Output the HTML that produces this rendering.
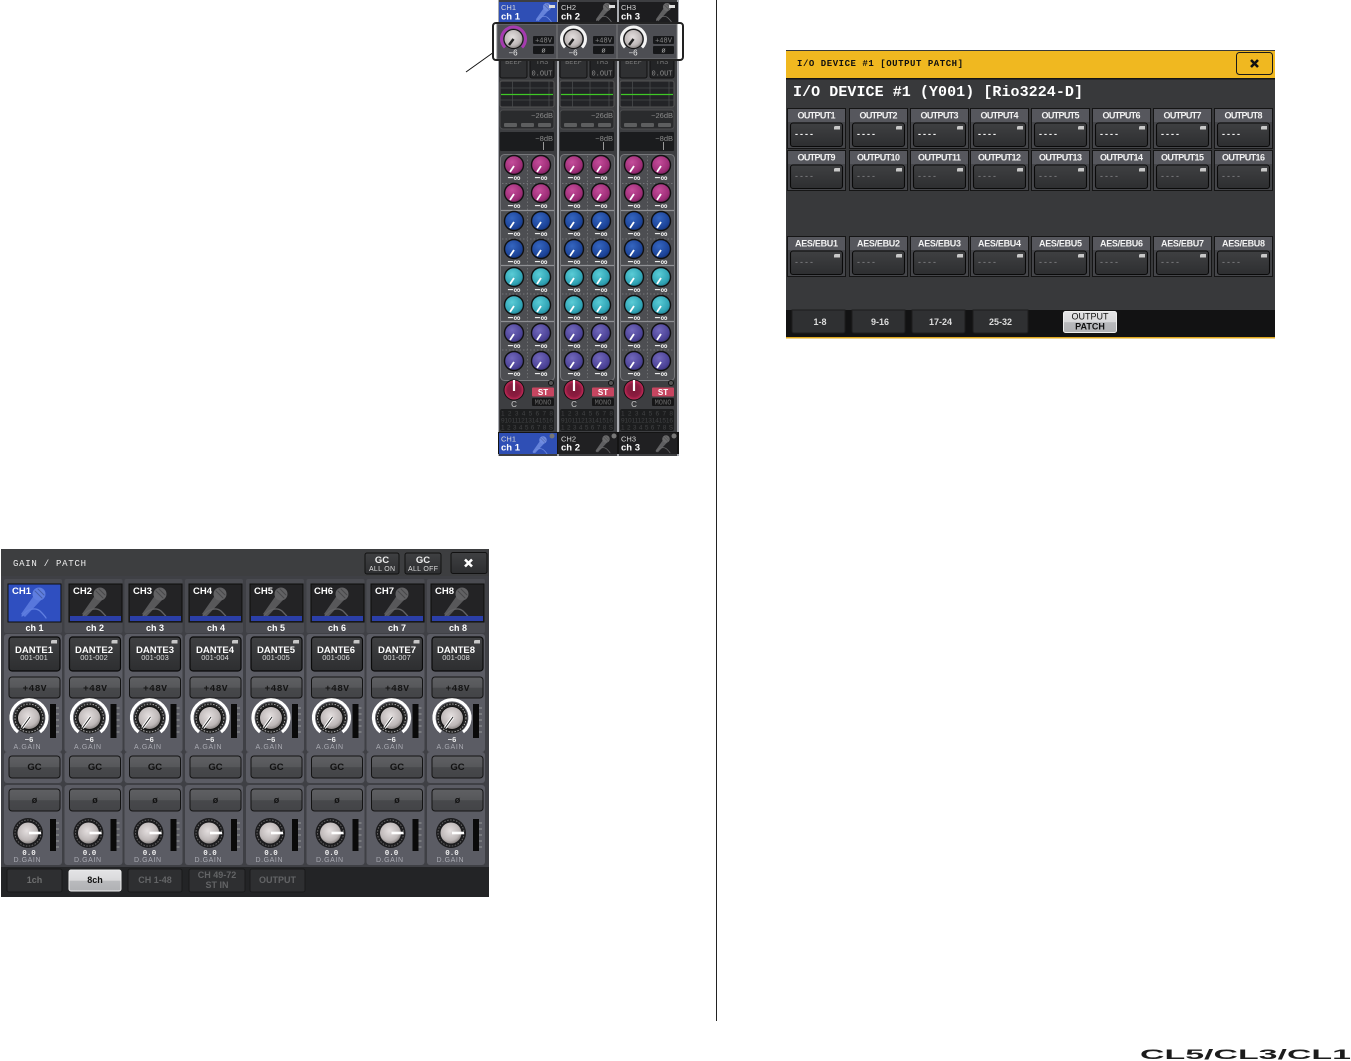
<!DOCTYPE html>
<html><head><meta charset="utf-8"><title>Console</title>
<style>
html,body{margin:0;padding:0;background:#fff}
svg.root{display:block;position:absolute;left:0;top:0;filter:blur(.3px)}
text{font-family:"Liberation Sans",sans-serif}
.m{font-family:"Liberation Mono",monospace}
.b{font-weight:bold}
</style></head><body>
<svg class="root" xmlns="http://www.w3.org/2000/svg" width="1351" height="1061" viewBox="0 0 1351 1061">
<defs>
<linearGradient id="bt" x1="0" y1="0" x2="0" y2="1"><stop offset="0" stop-color="#5f6063"/><stop offset=".5" stop-color="#56575a"/><stop offset=".52" stop-color="#47484b"/><stop offset="1" stop-color="#434447"/></linearGradient>
<linearGradient id="bd" x1="0" y1="0" x2="0" y2="1"><stop offset="0" stop-color="#3f4042"/><stop offset="1" stop-color="#2d2e30"/></linearGradient>
<linearGradient id="bl" x1="0" y1="0" x2="0" y2="1"><stop offset="0" stop-color="#e4e4e6"/><stop offset=".5" stop-color="#d8d8da"/><stop offset=".52" stop-color="#b9babd"/><stop offset="1" stop-color="#b0b1b4"/></linearGradient>
<radialGradient id="sil" cx=".45" cy=".4" r=".7"><stop offset="0" stop-color="#e4dfdf"/><stop offset=".65" stop-color="#bdb7b7"/><stop offset="1" stop-color="#6f6a68"/></radialGradient>
<radialGradient id="gm" cx=".4" cy=".35" r=".75"><stop offset="0" stop-color="#c44d9a"/><stop offset=".7" stop-color="#9c2c76"/><stop offset="1" stop-color="#5f174a"/></radialGradient>
<radialGradient id="gb" cx=".4" cy=".35" r=".75"><stop offset="0" stop-color="#3566c0"/><stop offset=".7" stop-color="#1c4398"/><stop offset="1" stop-color="#122a66"/></radialGradient>
<radialGradient id="gc" cx=".4" cy=".35" r=".75"><stop offset="0" stop-color="#5accd6"/><stop offset=".7" stop-color="#2fa2b4"/><stop offset="1" stop-color="#1a6a78"/></radialGradient>
<radialGradient id="gp" cx=".4" cy=".35" r=".75"><stop offset="0" stop-color="#7268bb"/><stop offset=".7" stop-color="#4b4296"/><stop offset="1" stop-color="#2f296a"/></radialGradient>
<radialGradient id="gr" cx=".5" cy=".5" r=".6"><stop offset="0" stop-color="#7c1838"/><stop offset=".55" stop-color="#8d1c40"/><stop offset=".8" stop-color="#c22a58"/><stop offset="1" stop-color="#8d1c40"/></radialGradient>

<g id="km"><circle r="9.5" fill="url(#gm)" stroke="#111" stroke-width="1.4"/><path d="M-4 7L0 1" stroke="#fff" stroke-width="1.8"/><text y="16" font-size="10" fill="#eee" text-anchor="middle" class="b" textLength="13" lengthAdjust="spacingAndGlyphs">−∞</text></g>
<g id="kb"><circle r="9.5" fill="url(#gb)" stroke="#111" stroke-width="1.4"/><path d="M-4 7L0 1" stroke="#fff" stroke-width="1.8"/><text y="16" font-size="10" fill="#eee" text-anchor="middle" class="b" textLength="13" lengthAdjust="spacingAndGlyphs">−∞</text></g>
<g id="kc"><circle r="9.5" fill="url(#gc)" stroke="#111" stroke-width="1.4"/><path d="M-4 7L0 1" stroke="#fff" stroke-width="1.8"/><text y="16" font-size="10" fill="#eee" text-anchor="middle" class="b" textLength="13" lengthAdjust="spacingAndGlyphs">−∞</text></g>
<g id="kp"><circle r="9.5" fill="url(#gp)" stroke="#111" stroke-width="1.4"/><path d="M-4 7L0 1" stroke="#fff" stroke-width="1.8"/><text y="16" font-size="10" fill="#eee" text-anchor="middle" class="b" textLength="13" lengthAdjust="spacingAndGlyphs">−∞</text></g>

<g id="mic" fill="none" stroke-linecap="round">
<path d="M-4 0L3 5L-14 23L-18 20Z" fill="currentColor" opacity=".85"/>
<circle r="6.500" fill="currentColor"/>
<path d="M-4 -3L3 4M-1 -5L5 1" stroke="#000" stroke-opacity=".25" stroke-width="1"/>
<path d="M-17 22C-12 15 -4 13 1 17C4 20 6 22 7 24" stroke="currentColor" stroke-width="1.300"/>
</g>
<g id="cr"><path d="M0 1.500Q0 0 1.500 0H6V3.500H0Z" fill="#c8c8c8"/></g>

<g id="stripbody">
<rect x="499" y="0" width="58" height="456" fill="#3d3e41"/>
<rect x="500" y="58" width="27" height="20" rx="2" fill="#2f3032" stroke="#111"/>
<text x="513.500" y="64" font-size="7" fill="#777" text-anchor="middle" class="m">BEEP</text>
<rect x="530" y="58" width="24" height="20" rx="2" fill="#232426" stroke="#111"/>
<text x="542" y="64" font-size="7" fill="#777" text-anchor="middle" class="m">THS</text>
<text x="542" y="75.500" font-size="7" fill="#8c8c8c" text-anchor="middle" class="m">0.OUT</text>
<rect x="500" y="81" width="54" height="26" rx="2" fill="#232427" stroke="#555"/>
<path d="M500 88H554M500 100H554M512.500 81V107M530 81V107M549 81V107" stroke="#484a4c" stroke-width=".8"/>
<path d="M501 94.500H553" stroke="#3fc826" stroke-width="1.200"/>
<rect x="500" y="110" width="54" height="19" rx="3" fill="#2a2b2d" stroke="#4d4e50"/>
<text x="553" y="118" font-size="7.500" fill="#8a8a8a" text-anchor="end">−26dB</text>
<rect x="504" y="123" width="13" height="4" rx="1" fill="#5d5e5f"/><rect x="521" y="123" width="13" height="4" rx="1" fill="#5d5e5f"/><rect x="538" y="123" width="13" height="4" rx="1" fill="#5d5e5f"/>
<rect x="500" y="132" width="54" height="19" rx="1" fill="#1b1c1e"/>
<text x="553" y="141" font-size="7.500" fill="#8a8a8a" text-anchor="end">−8dB</text>
<path d="M543.500 142V150" stroke="#999"/>
<rect x="500.500" y="154.500" width="54" height="226" rx="4" fill="#4d4e52" stroke="#77787c"/>
<path d="M527.500 156V378M502 183.500H553M502 239H553M502 294H553M502 350H553" stroke="#7e7f82" stroke-width=".7" stroke-dasharray="1.500 2"/>
<path d="M501 210.500H554M501 265.500H554M501 321.500H554" stroke="#8f9094" stroke-width="1.200"/>
<use href="#km" x="514" y="165"/><use href="#km" x="541" y="165"/><use href="#km" x="514" y="193"/><use href="#km" x="541" y="193"/>
<use href="#kb" x="514" y="221"/><use href="#kb" x="541" y="221"/><use href="#kb" x="514" y="249"/><use href="#kb" x="541" y="249"/>
<use href="#kc" x="514" y="277"/><use href="#kc" x="541" y="277"/><use href="#kc" x="514" y="305"/><use href="#kc" x="541" y="305"/>
<use href="#kp" x="514" y="333"/><use href="#kp" x="541" y="333"/><use href="#kp" x="514" y="361"/><use href="#kp" x="541" y="361"/>
<circle cx="514" cy="390" r="10" fill="url(#gr)" stroke="#111" stroke-width="1"/>
<path d="M514 380V391" stroke="#fff" stroke-width="2.200"/>
<text x="514" y="407" font-size="8" fill="#ccc" text-anchor="middle">C</text>
<circle cx="551" cy="383" r="2.500" fill="#555" stroke="#111"/>
<rect x="532" y="387.500" width="22" height="9" rx="1" fill="#c74560"/>
<text x="543" y="395" font-size="8" fill="#fff" text-anchor="middle" class="b">ST</text>
<rect x="532" y="398" width="22" height="8" rx="1" fill="#161617"/>
<text x="543" y="404.500" font-size="7" fill="#6b6b6b" text-anchor="middle" class="m">MONO</text>
<rect x="500" y="409" width="54" height="22" rx="2" fill="#1c1d1e"/>
<g font-size="6.500" fill="#414244" class="m">
<text x="501" y="415.500" textLength="52">12345678</text>
<text x="501" y="422.500" textLength="52">910111213141516</text>
<text x="501" y="429.500" textLength="52">12345678S</text>
</g>
</g>

<g id="strk">
<rect x="497" y="24" width="60" height="35" fill="#4d4e53" stroke="#77787b"/>
<path d="M505 47.500A12 12 0 1 1 522 47.500" fill="none" stroke="currentColor" stroke-width="3"/>
<circle cx="513.500" cy="39" r="10" fill="#111"/>
<circle cx="513.500" cy="39" r="9" fill="url(#sil)"/>
<path d="M509 45L513.500 39" stroke="#222" stroke-width="2.500"/>
<text x="513" y="55.500" font-size="8" fill="#eee" text-anchor="middle">−6</text>
<rect x="533" y="36" width="21" height="8" rx="1" fill="#17181a"/>
<text x="543.500" y="42.500" font-size="7" fill="#8a8a8a" text-anchor="middle" class="m">+48V</text>
<rect x="533" y="46" width="21" height="8" rx="1" fill="#17181a"/>
<text x="543.500" y="52.500" font-size="7" fill="#aaa" text-anchor="middle">ø</text>
</g>

<g id="ak">
<path d="M-11 14A18 18 0 1 1 11 14" fill="none" stroke="#fff" stroke-width="3.200"/>
<circle r="15.500" fill="#222"/>
<circle r="14" fill="none" stroke="#aaa" stroke-width="1" stroke-dasharray="1.500 1.500"/>
<circle r="12" fill="#111"/>
<circle r="11" fill="url(#sil)"/>
<path d="M-7 10L1 -1" stroke="#fff" stroke-width="3"/><path d="M-7 10L1 -1" stroke="#222" stroke-width="1"/>
</g>
<g id="dk">
<circle r="15" fill="#1c1c1e"/>
<circle r="13" fill="none" stroke="#666" stroke-width="1" stroke-dasharray="1.500 1.500"/>
<circle r="10.500" fill="url(#sil)"/>
<path d="M1 0H13" stroke="#fff" stroke-width="2.600"/>
</g>
<g id="col">
<rect x="4" y="579" width="58" height="54" rx="2" fill="#4a4b51"/>
<rect x="4" y="634" width="58" height="118" rx="3" fill="#5b5c64"/>
<rect x="4" y="752" width="58" height="31" rx="3" fill="#5b5c64"/>
<rect x="4" y="785" width="58" height="80" rx="3" fill="#5b5c64"/>
<rect x="9" y="637" width="51" height="34" rx="3" fill="url(#bd)" stroke="#0a0a0a" stroke-width="1.200"/>
<use href="#cr" x="51" y="640"/>
<rect x="9" y="677" width="51" height="21" rx="3" fill="url(#bt)" stroke="#141414"/>
<rect x="9" y="756" width="51" height="22" rx="3" fill="url(#bt)" stroke="#141414"/>
<rect x="9" y="789" width="51" height="22" rx="3" fill="url(#bt)" stroke="#141414"/>
<use href="#ak" x="29" y="718"/>
<rect x="50" y="704" width="6" height="34" fill="#0a0a0a"/>
<path d="M56 708H59M56 714H59M56 720H59M56 726H59M56 732H59" stroke="#aaa" stroke-width=".8"/>
<use href="#dk" x="28" y="833"/>
<rect x="50" y="819" width="6" height="32" fill="#0a0a0a"/>
<path d="M56 823H59M56 829H59M56 835H59M56 841H59M56 847H59" stroke="#aaa" stroke-width=".8"/>
<text x="34.500" y="691" font-size="9.500" fill="#151515" text-anchor="middle" class="m b" textLength="24">+48V</text>
<text x="34.500" y="770" font-size="9.500" fill="#111" text-anchor="middle" class="b">GC</text>
<text x="34.500" y="803" font-size="9" fill="#111" text-anchor="middle" class="b">ø</text>
<text x="29" y="742" font-size="7.500" fill="#eee" text-anchor="middle" class="b">−6</text>
<text x="27" y="749" font-size="7" fill="#a9aab2" text-anchor="middle" textLength="27">A.GAIN</text>
<text x="29" y="855" font-size="7.500" fill="#eee" text-anchor="middle" class="m b">0.0</text>
<text x="27" y="862" font-size="7" fill="#a9aab2" text-anchor="middle" textLength="27">D.GAIN</text>
</g>
<g id="ico">
<rect x="8" y="584" width="53" height="38" fill="#232325" stroke="#0c0c0c"/>
<svg x="8" y="584" width="53" height="38"><use href="#mic" x="31" y="10" color="#626264"/></svg>
<rect x="9" y="616" width="51" height="5" fill="#2b3fa8"/>
</g>
<g id="ob">
<rect x=".5" y=".5" width="58" height="40" fill="#25262a" stroke="#151515"/>
<rect x="1" y="1" width="57" height="13" fill="#56575d"/>
<rect x="1" y="14" width="57" height="26" fill="#45464a"/>
<rect x="3.500" y="15" width="52" height="23.500" rx="2.500" fill="url(#bd)" stroke="#0a0a0a" stroke-width="1.100"/>
<use href="#cr" x="47" y="18"/>
</g>
</defs>

<!-- leader -->
<path d="M466 72L494 52" stroke="#111" stroke-width="1"/>
<!-- strip -->
<rect x="498" y="0" width="181" height="456" fill="#a8aab0"/>
<use href="#stripbody"/><use href="#stripbody" x="60"/><use href="#stripbody" x="120"/>
<rect x="557" y="0" width="2" height="432" fill="#a9abb0"/><rect x="617" y="0" width="2" height="432" fill="#a9abb0"/>
<!-- top tabs -->
<rect x="499" y="2" width="58" height="20" fill="#2f4fb5"/>
<rect x="558" y="2" width="59" height="20" fill="#1d1d1f"/>
<rect x="619" y="2" width="59" height="20" fill="#1d1d1f"/>
<svg x="499" y="2" width="180" height="20"><use href="#mic" transform="translate(48 5) scale(.62)" color="#6f8be0"/><use href="#mic" transform="translate(108 5) scale(.62)" color="#6b6b6c"/><use href="#mic" transform="translate(168 5) scale(.62)" color="#6b6b6c"/></svg>
<rect x="549" y="5" width="6" height="3" fill="#ddd"/><rect x="609" y="5" width="6" height="3" fill="#ddd"/><rect x="669" y="5" width="6" height="3" fill="#ddd"/>
<g font-size="7.500" fill="#d8d8d8"><text x="501" y="10">CH1</text><text x="561" y="10">CH2</text><text x="621" y="10">CH3</text></g>
<g font-size="9.500" fill="#fff" class="m b"><text x="501" y="19.500">ch 1</text><text x="561" y="19.500">ch 2</text><text x="621" y="19.500">ch 3</text></g>
<!-- highlighted knobs -->
<rect x="493" y="23" width="190" height="37" rx="3" fill="#fff"/>
<use href="#strk" color="#a63bb0"/><use href="#strk" x="60" color="#f4f4f4"/><use href="#strk" x="120" color="#f4f4f4"/>
<rect x="493" y="23" width="190" height="37" rx="3" fill="none" stroke="#222" stroke-width="2"/>
<!-- bottom tabs -->
<rect x="498" y="432" width="181" height="22" fill="#141414"/>
<rect x="499" y="433" width="58" height="21" fill="#2f4fb5"/>
<rect x="558" y="433" width="59" height="21" fill="#202022"/>
<rect x="619" y="433" width="58" height="21" fill="#202022"/>
<svg x="499" y="433" width="180" height="21"><use href="#mic" transform="translate(44 7) scale(.58)" color="#6f8be0"/><use href="#mic" transform="translate(107 6) scale(.58)" color="#6b6b6c"/><use href="#mic" transform="translate(167 6) scale(.58)" color="#6b6b6c"/></svg>
<circle cx="552" cy="436" r="2.500" fill="#777"/><circle cx="614" cy="436" r="2.500" fill="#777"/><circle cx="674" cy="436" r="2.500" fill="#777"/>
<g font-size="7.500" fill="#d8d8d8"><text x="501" y="441.500">CH1</text><text x="561" y="441.500">CH2</text><text x="621" y="441.500">CH3</text></g>
<g font-size="9.500" fill="#fff" class="m b"><text x="501" y="450.500">ch 1</text><text x="561" y="450.500">ch 2</text><text x="621" y="450.500">ch 3</text></g>

<!-- divider -->
<rect x="716" y="0" width="1" height="1021" fill="#222"/>

<!-- GAIN / PATCH -->
<rect x="1" y="549" width="488" height="348" fill="#2b2c2e"/>
<rect x="1" y="549" width="488" height="27" fill="#3d3e40"/>
<rect x="1" y="576" width="488" height="291" fill="#3f4045"/>
<rect x="1" y="867" width="488" height="30" fill="#232426"/>
<text x="13" y="566" font-size="9" fill="#eee" class="m" textLength="73">GAIN / PATCH</text>
<rect x="365" y="553" width="34" height="21" rx="2" fill="url(#bd)" stroke="#111"/>
<text x="382" y="563" font-size="9.500" fill="#eee" text-anchor="middle" class="b">GC</text>
<text x="382" y="571" font-size="7" fill="#ddd" text-anchor="middle" textLength="26">ALL ON</text>
<rect x="405" y="553" width="36" height="21" rx="2" fill="url(#bd)" stroke="#111"/>
<text x="423" y="563" font-size="9.500" fill="#eee" text-anchor="middle" class="b">GC</text>
<text x="423" y="571" font-size="7" fill="#ddd" text-anchor="middle" textLength="30">ALL OFF</text>
<rect x="451" y="552.500" width="36" height="21" rx="2" fill="url(#bd)" stroke="#111"/>
<path d="M465 559.500L472 566.500M472 559.500L465 566.500" stroke="#fff" stroke-width="2.600"/>

<use href="#col"/><use href="#col" x="60.500"/><use href="#col" x="120.500"/><use href="#col" x="181"/><use href="#col" x="242"/><use href="#col" x="302.500"/><use href="#col" x="362.500"/><use href="#col" x="423"/>
<!-- icons -->
<rect x="8" y="584" width="53" height="38" fill="#2f4fc0" stroke="#0c0c0c"/>
<svg x="8" y="584" width="53" height="38"><use href="#mic" x="31" y="10" color="#5f7ee0"/></svg>
<use href="#ico" x="61"/><use href="#ico" x="121"/><use href="#ico" x="181"/><use href="#ico" x="242"/><use href="#ico" x="303"/><use href="#ico" x="363"/><use href="#ico" x="423"/>
<g font-size="9.500" fill="#fff" class="b">
<text x="12" y="594">CH1</text><text x="73" y="594">CH2</text><text x="133" y="594">CH3</text><text x="193" y="594">CH4</text><text x="254" y="594">CH5</text><text x="314" y="594">CH6</text><text x="375" y="594">CH7</text><text x="435" y="594">CH8</text>
</g>
<g font-size="9" fill="#fff" class="m b" text-anchor="middle">
<text x="34.500" y="631">ch 1</text><text x="95" y="631">ch 2</text><text x="155" y="631">ch 3</text><text x="216" y="631">ch 4</text><text x="276" y="631">ch 5</text><text x="337" y="631">ch 6</text><text x="397" y="631">ch 7</text><text x="458" y="631">ch 8</text>
</g>
<g font-size="9.500" fill="#fff" class="b" text-anchor="middle">
<text x="34" y="653">DANTE1</text><text x="94" y="653">DANTE2</text><text x="155" y="653">DANTE3</text><text x="215" y="653">DANTE4</text><text x="276" y="653">DANTE5</text><text x="336" y="653">DANTE6</text><text x="397" y="653">DANTE7</text><text x="456" y="653">DANTE8</text>
</g>
<g font-size="7.500" fill="#ddd" text-anchor="middle">
<text x="34" y="660">001-001</text><text x="94" y="660">001-002</text><text x="155" y="660">001-003</text><text x="215" y="660">001-004</text><text x="276" y="660">001-005</text><text x="336" y="660">001-006</text><text x="397" y="660">001-007</text><text x="456" y="660">001-008</text>
</g>
<!-- bottom tabs -->
<g fill="#2e2f31" stroke="#1a1a1b">
<rect x="7" y="869" width="55" height="23" rx="2"/><rect x="128" y="869" width="54" height="23" rx="2"/><rect x="189" y="869" width="56" height="23" rx="2"/><rect x="250" y="869" width="55" height="23" rx="2"/>
</g>
<rect x="69" y="870" width="52" height="21" rx="2" fill="url(#bl)" stroke="#eee"/>
<g class="m b" font-size="9" text-anchor="middle">
<text x="34.500" y="883" fill="#6e6f70">1ch</text>
<text x="95" y="883" fill="#111">8ch</text>
<text x="155" y="883" fill="#636466">CH 1-48</text>
<text x="217" y="878" fill="#636466">CH 49-72</text>
<text x="217" y="888" fill="#636466">ST IN</text>
<text x="277.500" y="883" fill="#636466">OUTPUT</text>
</g>

<!-- I/O DEVICE -->
<rect x="786" y="50" width="489" height="288" fill="#38393b"/>
<rect x="786" y="51" width="489" height="27" fill="#f0b820"/>
<rect x="786" y="78" width="489" height="1.500" fill="#151515"/>
<text x="797" y="66" font-size="9" fill="#111" class="m b" textLength="166">I/O DEVICE #1 [OUTPUT PATCH]</text>
<rect x="1236.500" y="52.500" width="36" height="22" rx="3" fill="#f0b820" stroke="#1a1a1a"/>
<path d="M1251 60L1258 67M1258 60L1251 67" stroke="#111" stroke-width="2.600"/>
<text x="793" y="96" font-size="15" fill="#fff" class="m b" textLength="290">I/O DEVICE #1 (Y001) [Rio3224-D]</text>

<use href="#ob" x="787" y="108"/><use href="#ob" x="849" y="108"/><use href="#ob" x="910" y="108"/><use href="#ob" x="970" y="108"/><use href="#ob" x="1031" y="108"/><use href="#ob" x="1092" y="108"/><use href="#ob" x="1153" y="108"/><use href="#ob" x="1214" y="108"/>
<use href="#ob" x="787" y="150"/><use href="#ob" x="849" y="150"/><use href="#ob" x="910" y="150"/><use href="#ob" x="970" y="150"/><use href="#ob" x="1031" y="150"/><use href="#ob" x="1092" y="150"/><use href="#ob" x="1153" y="150"/><use href="#ob" x="1214" y="150"/>
<use href="#ob" x="787" y="236"/><use href="#ob" x="849" y="236"/><use href="#ob" x="910" y="236"/><use href="#ob" x="970" y="236"/><use href="#ob" x="1031" y="236"/><use href="#ob" x="1092" y="236"/><use href="#ob" x="1153" y="236"/><use href="#ob" x="1214" y="236"/>
<g font-size="9" fill="#f2f2f2" class="b" text-anchor="middle">
<text x="816.500" y="118.500" textLength="38">OUTPUT1</text><text x="878.500" y="118.500" textLength="38">OUTPUT2</text><text x="939.500" y="118.500" textLength="38">OUTPUT3</text><text x="999.500" y="118.500" textLength="38">OUTPUT4</text><text x="1060.500" y="118.500" textLength="38">OUTPUT5</text><text x="1121.500" y="118.500" textLength="38">OUTPUT6</text><text x="1182.500" y="118.500" textLength="38">OUTPUT7</text><text x="1243.500" y="118.500" textLength="38">OUTPUT8</text>
<text x="816.500" y="160.500" textLength="38">OUTPUT9</text><text x="878.500" y="160.500" textLength="43">OUTPUT10</text><text x="939.500" y="160.500" textLength="43">OUTPUT11</text><text x="999.500" y="160.500" textLength="43">OUTPUT12</text><text x="1060.500" y="160.500" textLength="43">OUTPUT13</text><text x="1121.500" y="160.500" textLength="43">OUTPUT14</text><text x="1182.500" y="160.500" textLength="43">OUTPUT15</text><text x="1243.500" y="160.500" textLength="43">OUTPUT16</text>
<text x="816.500" y="246.500" textLength="43">AES/EBU1</text><text x="878.500" y="246.500" textLength="43">AES/EBU2</text><text x="939.500" y="246.500" textLength="43">AES/EBU3</text><text x="999.500" y="246.500" textLength="43">AES/EBU4</text><text x="1060.500" y="246.500" textLength="43">AES/EBU5</text><text x="1121.500" y="246.500" textLength="43">AES/EBU6</text><text x="1182.500" y="246.500" textLength="43">AES/EBU7</text><text x="1243.500" y="246.500" textLength="43">AES/EBU8</text>
</g>
<g font-size="9" class="m b" fill="#f4f4f4">
<text x="795" y="137" textLength="18">----</text><text x="857" y="137" textLength="18">----</text><text x="918" y="137" textLength="18">----</text><text x="978" y="137" textLength="18">----</text><text x="1039" y="137" textLength="18">----</text><text x="1100" y="137" textLength="18">----</text><text x="1161" y="137" textLength="18">----</text><text x="1222" y="137" textLength="18">----</text>
</g>
<g font-size="9" class="m" fill="#8d8e90">
<text x="795" y="179" textLength="18">----</text><text x="857" y="179" textLength="18">----</text><text x="918" y="179" textLength="18">----</text><text x="978" y="179" textLength="18">----</text><text x="1039" y="179" textLength="18">----</text><text x="1100" y="179" textLength="18">----</text><text x="1161" y="179" textLength="18">----</text><text x="1222" y="179" textLength="18">----</text>
<text x="795" y="265" textLength="18">----</text><text x="857" y="265" textLength="18">----</text><text x="918" y="265" textLength="18">----</text><text x="978" y="265" textLength="18">----</text><text x="1039" y="265" textLength="18">----</text><text x="1100" y="265" textLength="18">----</text><text x="1161" y="265" textLength="18">----</text><text x="1222" y="265" textLength="18">----</text>
</g>
<rect x="786" y="310" width="489" height="27" fill="#121213"/>
<rect x="786" y="337" width="489" height="1.500" fill="#e0a91e"/>
<g fill="#2f3032" stroke="#1d1d1e">
<path d="M792 310V331Q792 333 794 333H843Q845 333 845 331V310Z"/><path d="M852 310V331Q852 333 854 333H903Q905 333 905 331V310Z"/><path d="M912 310V331Q912 333 914 333H963Q965 333 965 331V310Z"/><path d="M973 310V331Q973 333 975 333H1026Q1028 333 1028 331V310Z"/>
</g>
<g font-size="9" fill="#dcdcdc" class="m b" text-anchor="middle">
<text x="820" y="325">1-8</text><text x="880" y="325">9-16</text><text x="940.500" y="325">17-24</text><text x="1000.500" y="325">25-32</text>
</g>
<rect x="1063.500" y="311.500" width="53" height="21" rx="2" fill="url(#bl)" stroke="#eee"/>
<g font-size="9" fill="#111" class="m" text-anchor="middle"><text x="1090" y="319.500">OUTPUT</text><text x="1090" y="329.500" class="b">PATCH</text></g>

<!-- logo -->
<text x="1140" y="1059" font-size="14" fill="#1c1c1c" class="b" textLength="211" lengthAdjust="spacingAndGlyphs">CL5/CL3/CL1</text>
</svg>
</body></html>
